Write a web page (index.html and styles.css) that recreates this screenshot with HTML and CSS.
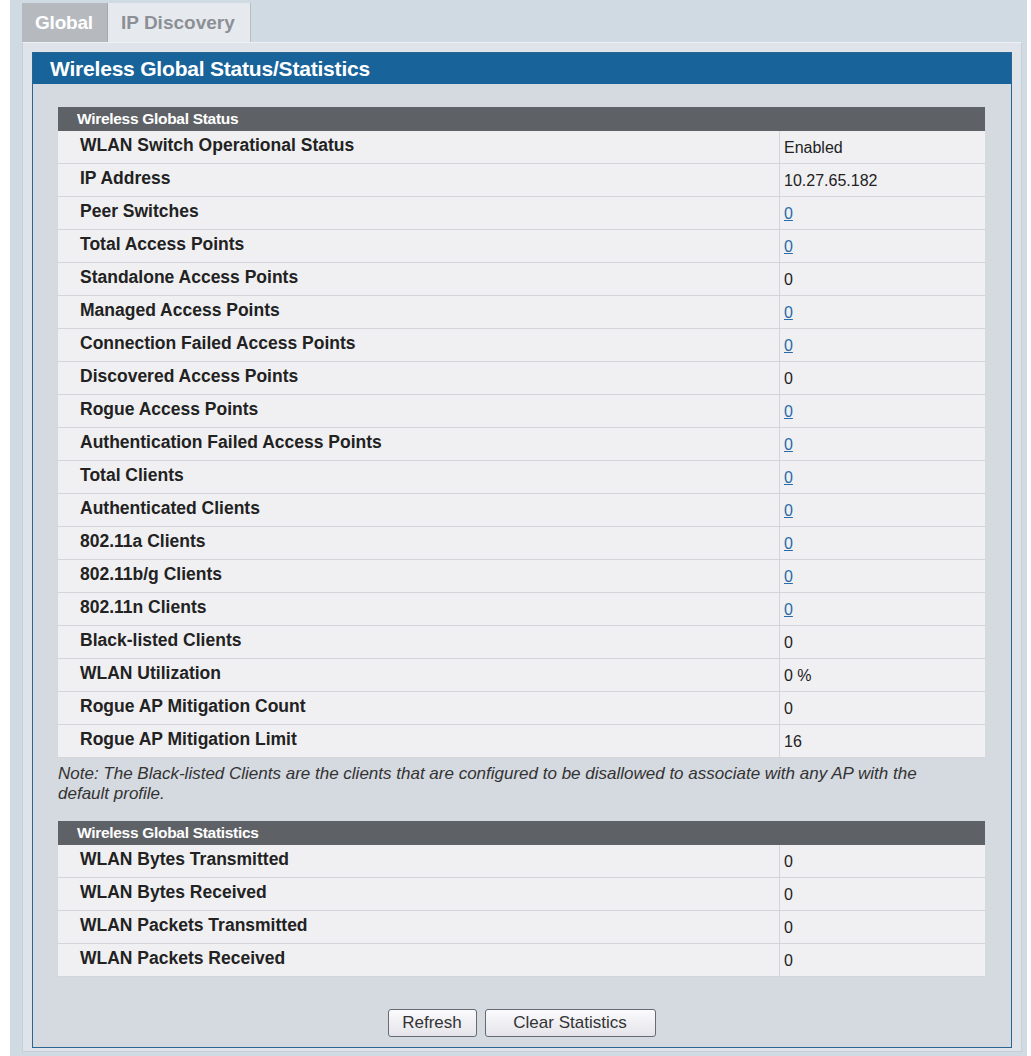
FILE: index.html
```html
<!DOCTYPE html>
<html lang="en">
<head>
    <meta charset="UTF-8">
    <title>Wireless Global Status/Statistics</title>
    <link rel="stylesheet" href="styles.css">
</head>
<body>
    <div class="page">
        <div class="tabs">
            <a class="tab actif" href="#">Global</a>
            <a class="tab" href="#">IP Discovery</a>
        </div>
        <div class="panel">
            <div class="boite">
                <div class="titre">Wireless Global Status/Statistics</div>
                <div class="contenu">
                    <table class="stats">
                        <tr><th colspan="2">Wireless Global Status</th></tr>
                        <tr><td class="lib">WLAN Switch Operational Status</td><td class="val">Enabled</td></tr>
                        <tr><td class="lib">IP Address</td><td class="val">10.27.65.182</td></tr>
                        <tr><td class="lib">Peer Switches</td><td class="val"><a href="#">0</a></td></tr>
                        <tr><td class="lib">Total Access Points</td><td class="val"><a href="#">0</a></td></tr>
                        <tr><td class="lib">Standalone Access Points</td><td class="val">0</td></tr>
                        <tr><td class="lib">Managed Access Points</td><td class="val"><a href="#">0</a></td></tr>
                        <tr><td class="lib">Connection Failed Access Points</td><td class="val"><a href="#">0</a></td></tr>
                        <tr><td class="lib">Discovered Access Points</td><td class="val">0</td></tr>
                        <tr><td class="lib">Rogue Access Points</td><td class="val"><a href="#">0</a></td></tr>
                        <tr><td class="lib">Authentication Failed Access Points</td><td class="val"><a href="#">0</a></td></tr>
                        <tr><td class="lib">Total Clients</td><td class="val"><a href="#">0</a></td></tr>
                        <tr><td class="lib">Authenticated Clients</td><td class="val"><a href="#">0</a></td></tr>
                        <tr><td class="lib">802.11a Clients</td><td class="val"><a href="#">0</a></td></tr>
                        <tr><td class="lib">802.11b/g Clients</td><td class="val"><a href="#">0</a></td></tr>
                        <tr><td class="lib">802.11n Clients</td><td class="val"><a href="#">0</a></td></tr>
                        <tr><td class="lib">Black-listed Clients</td><td class="val">0</td></tr>
                        <tr><td class="lib">WLAN Utilization</td><td class="val">0 %</td></tr>
                        <tr><td class="lib">Rogue AP Mitigation Count</td><td class="val">0</td></tr>
                        <tr><td class="lib">Rogue AP Mitigation Limit</td><td class="val">16</td></tr>
                    </table>
                    <p class="note">Note: The Black-listed Clients are the clients that are configured to be disallowed to associate with any AP with the default profile.</p>
                    <table class="stats">
                        <tr><th colspan="2">Wireless Global Statistics</th></tr>
                        <tr><td class="lib">WLAN Bytes Transmitted</td><td class="val">0</td></tr>
                        <tr><td class="lib">WLAN Bytes Received</td><td class="val">0</td></tr>
                        <tr><td class="lib">WLAN Packets Transmitted</td><td class="val">0</td></tr>
                        <tr><td class="lib">WLAN Packets Received</td><td class="val">0</td></tr>
                    </table>
                    <div class="boutons">
                        <button type="button" class="btn-refresh">Refresh</button>
                        <button type="button" class="btn-clear">Clear Statistics</button>
                    </div>
                </div>
            </div>
        </div>
    </div>
</body>
</html>
```
FILE: styles.css
```css
body {
    font-family: "Liberation Sans", Arial, sans-serif;
    background-color: #ffffff;
    margin: 0;
    padding: 0;
    color: #222;
}
.page {
    background-color: #cfdae3;
    margin: 0 4px 0 10px;
    padding: 3px 5px 4px 12px;
}
.tabs {
    display: flex;
    height: 39px;
}
.tab {
    display: block;
    font-size: 19px;
    font-weight: bold;
    line-height: 39px;
    text-decoration: none;
    padding: 0 13px;
    color: #8c9096;
    background-color: #e6eaee;
    border-right: 1px solid #b9bec4;
    width: 116px;
}
.tab.actif {
    color: #ffffff;
    background-color: #b6babf;
    width: 59px;
    border-right: 1px solid #a4a9af;
    letter-spacing: -0.2px;
}
.panel {
    background-color: #dfe4ea;
    border: 1px solid #c7ced6;
    border-top: 1px solid #eef1f4;
    padding: 9px 9px 3px 9px;
}
.boite {
    border: 1px solid #2b6593;
    background-color: #d5d9e0;
}
.titre {
    background-color: #17639a;
    color: #ffffff;
    font-size: 21px;
    font-weight: bold;
    height: 31px;
    line-height: 31px;
    padding-left: 17px;
    letter-spacing: -0.2px;
}
.contenu {
    padding: 23px 26px 10px 25px;
}
.stats {
    width: 100%;
    border-collapse: collapse;
}
.stats th {
    background-color: #5e6266;
    color: #ffffff;
    text-align: left;
    font-size: 15.5px;
    letter-spacing: -0.3px;
    height: 24px;
    padding: 0 0 0 19px;
}
.stats td {
    background-color: #f0f0f2;
    border-bottom: 1px solid #d4d5d9;
    height: 29px;
    padding: 0;
}
.stats .lib {
    font-weight: bold;
    font-size: 17.5px;
    padding-left: 22px;
    padding-bottom: 3px;
}
.stats .val {
    width: 201px;
    font-size: 16px;
    padding-left: 4px;
    padding-top: 1px;
    border-left: 1px solid #d4d5d9;
}
.stats .val a {
    color: #2a6aa8;
}
.note {
    font-style: italic;
    font-size: 17px;
    line-height: 20px;
    color: #333;
    margin: 6px 20px 17px 0;
}
.boutons {
    display: flex;
    justify-content: center;
    gap: 8px;
    margin-top: 32px;
}
button {
    font-family: "Liberation Sans", Arial, sans-serif;
    font-size: 17px;
    color: #333;
    height: 28px;
    padding: 0;
    background: linear-gradient(#fbfbfd, #e4e4ea);
    border: 1px solid #666a72;
    border-radius: 3px;
    cursor: pointer;
}
.btn-refresh {
    width: 89px;
}
.btn-clear {
    width: 171px;
}
button:hover {
    background: #e8e8ee;
}
```
